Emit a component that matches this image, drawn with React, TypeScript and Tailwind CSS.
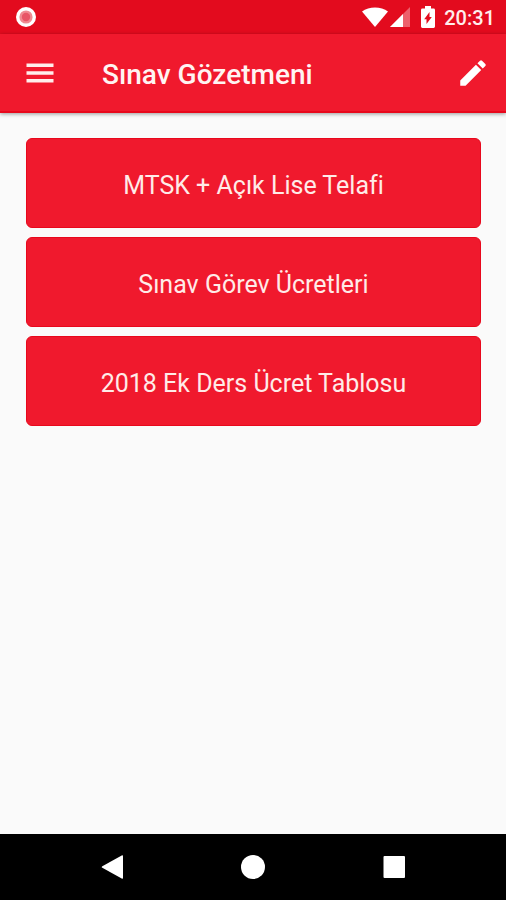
const menuItems = [
  "MTSK + Açık Lise Telafi",
  "Sınav Görev Ücretleri",
  "2018 Ek Ders Ücret Tablosu",
];

function StatusBar() {
  return (
    <div className="flex h-[34px] items-center justify-between bg-[#e30b1e] pl-4 pr-[11px] text-[#ffeeec]">
      <svg className="size-5" viewBox="0 0 20 20" aria-hidden="true">
        <circle cx="10" cy="10" r="10" fill="#fff" />
        <circle cx="10" cy="10" r="6.6" fill="#f08a92" />
        <circle cx="10" cy="10" r="4.2" fill="#e85566" />
      </svg>
      <div className="flex items-center">
        <svg className="h-5 w-[26px]" viewBox="0 0 26 20" aria-hidden="true">
          <path d="M0 4.600C7-1 19-1 26 4.600L13 20z" fill="#fff" />
        </svg>
        <svg className="ml-0.5 size-5" viewBox="0 0 20 20" aria-hidden="true">
          <path d="M20 0v20H0z" fill="#fff" fillOpacity="0.35" />
          <path d="M13 7v13H0z" fill="#fff" />
        </svg>
        <svg className="ml-[11px] h-[22px] w-3.5" viewBox="0 0 14 22" aria-hidden="true">
          <path d="M4 0h6v2.500h2.600q1.400 0 1.400 1.400v16.700q0 1.400-1.400 1.400H1.400Q0 22 0 20.600V3.900Q0 2.500 1.400 2.500H4z" fill="#fff" />
          <path d="M8.500 6v5h2.300L5.500 18v-4.800H3.200z" fill="#e30b1e" />
        </svg>
        <span className="ml-[9px] pt-0.5 text-xl font-medium leading-6">20:31</span>
      </div>
    </div>
  );
}

function AppBar() {
  return (
    <header className="z-10 flex h-[79px] items-center border-b-2 border-[#e8081c] bg-[#f0192d] pl-[26px] pr-4 text-[#fff4f2] shadow-[0_1px_4px_rgba(0,0,0,0.4)]">
      <button type="button" aria-label="Menü">
        <svg className="h-5 w-7" viewBox="0 0 28 20" fill="#ffeeec" aria-hidden="true">
          <path d="M0.500 0.500h27v3.600h-27zM0.500 8.200h27v3.600h-27zM0.500 15.900h27v3.600h-27z" />
        </svg>
      </button>
      <h1 className="ml-12 flex-1 pt-1 text-[28px] font-medium leading-8">Sınav Gözetmeni</h1>
      <button type="button" aria-label="Düzenle">
        <svg className="size-[34px]" viewBox="0 0 24 24" fill="#fff" aria-hidden="true">
          <path d="M3 17.250V21h3.750L17.810 9.940l-3.750-3.750L3 17.250zM20.710 7.040a1 1 0 0 0 0-1.410l-2.340-2.340a1 1 0 0 0-1.410 0l-1.830 1.830 3.750 3.750 1.830-1.830z" />
        </svg>
      </button>
    </header>
  );
}

function NavigationBar() {
  return (
    <nav className="flex h-[66px] items-center justify-center gap-[117px] bg-black">
      <button type="button" aria-label="Geri">
        <svg className="size-6" viewBox="0 0 24 24" fill="#fff" aria-hidden="true">
          <path d="M2.300 11.200 21.700.4q1.300-.7 1.300.8v21.600q0 1.500-1.300.8L2.300 12.800q-1.200-.8 0-1.600z" />
        </svg>
      </button>
      <button type="button" aria-label="Ana ekran">
        <svg className="size-6" viewBox="0 0 24 24" fill="#fff" aria-hidden="true">
          <circle cx="12" cy="12" r="12" />
        </svg>
      </button>
      <button type="button" aria-label="Son uygulamalar">
        <svg className="size-6" viewBox="0 0 24 24" fill="#fff" aria-hidden="true">
          <rect x="1.500" y="1" width="21.500" height="22" rx="1" />
        </svg>
      </button>
    </nav>
  );
}

export default function App() {
  return (
    <div className="flex min-h-screen flex-col bg-[#fafafa] font-['Roboto',sans-serif]">
      <StatusBar />
      <AppBar />
      <main className="flex flex-1 flex-col gap-[9px] pl-[26px] pr-[25px] pt-[25px]">
        {menuItems.map((item) => (
          <button
            key={item}
            type="button"
            className="h-[90px] rounded-md border border-[#e8081c] bg-[#f0192d] pt-1.5 text-[25px] leading-8 text-[#ffebe8] [font-variant-ligatures:none]"
          >
            {item}
          </button>
        ))}
      </main>
      <NavigationBar />
    </div>
  );
}
